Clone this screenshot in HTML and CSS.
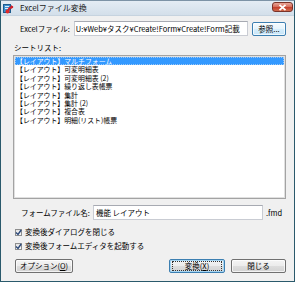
FILE: index.html
```html
<!DOCTYPE html>
<html lang="ja">
<head>
<meta charset="utf-8">
<title>Excelファイル変換</title>
<link rel="stylesheet" href="styles.css">
</head>
<body>
<div class="window">
  <div class="titlebar">
    <svg class="app-icon" width="11" height="11" viewBox="0 0 11 11">
      <rect x="0.5" y="1.5" width="7" height="8" fill="#3b8fd0" stroke="#1d5c8e" stroke-width="1"/>
      <rect x="2" y="3" width="4" height="1" fill="#dbeefb"/>
      <rect x="2" y="5" width="4" height="1" fill="#dbeefb"/>
      <path d="M5 10 C5 6 7 4 10 4" fill="none" stroke="#d0202a" stroke-width="2"/>
      <path d="M8 2 L10.5 4 L8 6 Z" fill="#d0202a"/>
      <circle cx="4.5" cy="8.5" r="2" fill="#e02a2a"/>
    </svg>
    <span class="title">Excelファイル変換</span>
    <div class="close">
      <svg width="9" height="7" viewBox="0 0 9 7"><path d="M1.5 0.8 L7.5 6.2 M7.5 0.8 L1.5 6.2" stroke="#fff" stroke-width="1.8"/></svg>
    </div>
  </div>
  <div class="client">
    <div class="row file-row">
      <span class="lbl">Excelファイル:</span>
      <div class="field file-field">U:¥Web¥タスク¥Create!Form¥Create!Form記載</div>
      <button class="btn btn-hot browse">参照...</button>
    </div>
    <div class="section-label">シートリスト:</div>
    <ul class="listbox">
      <li class="selected">【レイアウト】マルチフォーム</li>
      <li>【レイアウト】可変明細表</li>
      <li>【レイアウト】可変明細表 (2)</li>
      <li>【レイアウト】繰り返し表帳票</li>
      <li>【レイアウト】集計</li>
      <li>【レイアウト】集計 (2)</li>
      <li>【レイアウト】複合表</li>
      <li>【レイアウト】明細(リスト)帳票</li>
    </ul>
    <div class="row name-row">
      <span class="lbl">フォームファイル名:</span>
      <div class="field name-field">機能 レイアウト</div>
      <span class="ext">.fmd</span>
    </div>
    <div class="check-row first">
      <span class="checkbox"><svg width="7" height="7" viewBox="0 0 7 7"><path d="M1 3.5 L3 5.5 L6.2 1" fill="none" stroke="#2d4a7a" stroke-width="1.4"/></svg></span>
      <span>変換後ダイアログを閉じる</span>
    </div>
    <div class="check-row">
      <span class="checkbox"><svg width="7" height="7" viewBox="0 0 7 7"><path d="M1 3.5 L3 5.5 L6.2 1" fill="none" stroke="#2d4a7a" stroke-width="1.4"/></svg></span>
      <span>変換後フォームエディタを起動する</span>
    </div>
    <div class="button-row">
      <button class="btn options">オプション(<u>O</u>)</button>
      <span class="spacer"></span>
      <button class="btn default"><span class="focus">変換(<u>X</u>)</span></button>
      <button class="btn close-btn">閉じる</button>
    </div>
  </div>
</div>
</body>
</html>
```

FILE: styles.css
```css
* { box-sizing: border-box; }
html, body {
  margin: 0;
  padding: 0;
  background: #ffffff;
}
body {
  font-family: "Noto Sans CJK JP", "Noto Sans", sans-serif;
  font-size: 7.5px;
  color: #000;
  width: 300px;
  height: 283px;
  overflow: hidden;
}
.window {
  width: 295px;
  height: 282px;
  border: 1px solid #2a5a6c;
  border-top-color: #7d93a6;
  background: #f0f0f0;
  display: flex;
  flex-direction: column;
}
.titlebar {
  height: 15px;
  flex: none;
  display: flex;
  align-items: center;
  padding: 0 1px 0 2px;
  background: linear-gradient(#e4ecf4, #d3dfea);
  border-bottom: 1px solid #c6d3df;
}
.app-icon { flex: none; margin-right: 6px; margin-top: 1px; }
.title {
  font-size: 8px;
  line-height: 10px;
  color: #1a1a1a;
  flex: 1;
}
.close {
  width: 21px;
  height: 10px;
  margin-top: -2px;
  border: 1px solid #7a3329;
  border-radius: 3px;
  background: linear-gradient(#e9a597 0%, #d7705f 45%, #c4402d 55%, #d06a4c 100%);
  display: flex;
  align-items: center;
  justify-content: center;
}
.client {
  flex: 1;
  display: flex;
  flex-direction: column;
  padding: 5px 8px 0 11px;
}
.row {
  display: flex;
  align-items: center;
}
.file-row {
  height: 15px;
  padding-left: 8px;
}
.lbl { white-space: nowrap; line-height: 9px; }
.field {
  height: 15px;
  background: #fff;
  border: 1px solid #c9ccd3;
  border-top-color: #a7aab2;
  white-space: nowrap;
  overflow: hidden;
  line-height: 13px;
  padding-left: 1px;
}
.file-field {
  flex: 1;
  margin-left: 4px;
}
.btn {
  font-family: inherit;
  font-size: 7.5px;
  color: #000;
  height: 14px;
  padding: 0;
  line-height: 12px;
  border: 1px solid #707070;
  border-radius: 2px;
  background: linear-gradient(#f4f4f4 0%, #ececec 48%, #dddddd 52%, #d2d2d2 100%);
  box-shadow: inset 0 0 0 1px rgba(255,255,255,0.7);
  display: flex;
  align-items: center;
  justify-content: center;
}
.btn u { text-decoration: underline; }
.btn-hot {
  border-color: #3c7fb1;
  background: linear-gradient(#f5fbfe 0%, #e6f4fc 48%, #d5edfb 52%, #c6e5f8 100%);
}
.browse {
  width: 34px;
  margin-left: 4px;
}
.section-label {
  margin-top: 7px;
  padding-left: 2px;
  line-height: 9px;
  height: 9px;
}
.listbox {
  list-style: none;
  margin: 3px 0 0 1px;
  padding: 1px 1px;
  height: 144px;
  background: #fff;
  border: 1px solid #a3a3a3;
  box-shadow: inset 0 0 0 1px #e0e0e0;
}
.listbox li {
  height: 8.4px;
  line-height: 8.4px;
  padding-left: 1px;
  white-space: nowrap;
  font-size: 6.9px;
}
.listbox li.selected {
  background: #3399ff;
  color: #fff;
  outline: 1px dotted #9cc8f5;
  outline-offset: -1px;
}
.name-row {
  margin-top: 6px;
  height: 15px;
  padding-left: 9px;
}
.name-field {
  flex: 1;
  margin-left: 3px;
  padding-left: 2px;
}
.ext {
  width: 23px;
  padding-left: 3px;
  flex: none;
}
.check-row {
  display: flex;
  align-items: center;
  height: 10px;
  margin-top: 4px;
  padding-left: 3px;
  line-height: 10px;
}
.check-row.first { margin-top: 7px; }
.checkbox {
  width: 7px;
  height: 7px;
  flex: none;
  border: 1px solid #8e8f8f;
  background: linear-gradient(#e4e4e4, #f7f7f7);
  display: flex;
  align-items: center;
  justify-content: center;
  margin-right: 3px;
}
.checkbox svg { flex: none; margin: -1px; }
.button-row {
  display: flex;
  margin-top: 8px;
  padding-left: 3px;
}
.spacer { flex: 1; }
.options { width: 58px; }
.default {
  width: 56px;
  margin-right: 6px;
  border-color: #3c7fb1;
  box-shadow: inset 0 0 0 1px #a7d6f3;
}
.focus {
  display: flex;
  align-items: center;
  justify-content: center;
  width: 50px;
  height: 10px;
  border: 1px dotted #333;
}
.close-btn { width: 55px; }
```
